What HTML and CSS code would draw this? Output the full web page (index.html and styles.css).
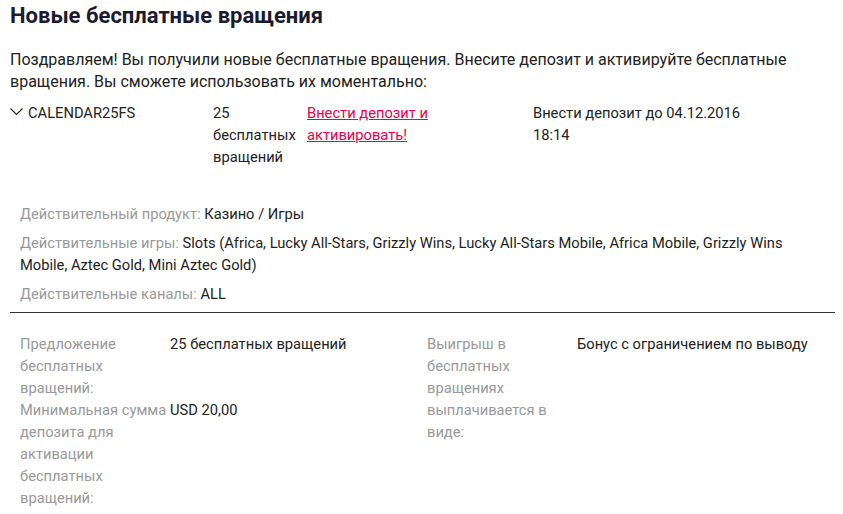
FILE: index.html
```html
<!DOCTYPE html>
<html lang="ru">

<head>
    <meta charset="UTF-8">
    <meta name="viewport" content="width=device-width, initial-scale=1.0">
    <title>Новые бесплатные вращения</title>
    <link rel="stylesheet" href="styles.css">
</head>

<body>
    <h2 class="title">Новые бесплатные вращения</h2>
    <p class="intro">Поздравляем! Вы получили новые бесплатные вращения. Внесите депозит и активируйте бесплатные
        вращения. Вы сможете использовать их моментально:</p>

    <div class="offer-row">
        <div class="offer-code">
            <svg class="chevron" width="13" height="8" viewBox="0 0 13 8">
                <path d="M0.5 0.5 L6.5 6.5 L12.5 0.5" fill="none" stroke="#222" stroke-width="1.2" />
            </svg>
            CALENDAR25FS
        </div>
        <div class="offer-amount">25 бесплатных вращений</div>
        <div class="offer-action"><a href="#">Внести депозит и активировать!</a></div>
        <div class="offer-expiry">Внести депозит до 04.12.2016 18:14</div>
    </div>

    <div class="details">
        <p><span class="label">Действительный продукт:</span> Казино / Игры</p>
        <p><span class="label">Действительные игры:</span> Slots (Africa, Lucky All-Stars, Grizzly Wins, Lucky All-Stars
            Mobile, Africa Mobile, Grizzly Wins Mobile, Aztec Gold, Mini Aztec Gold)</p>
        <p><span class="label">Действительные каналы:</span> ALL</p>
    </div>

    <div class="terms">
        <dl class="terms-col">
            <dt>Предложение бесплатных вращений:</dt>
            <dd>25 бесплатных вращений</dd>
            <dt>Минимальная сумма депозита для активации бесплатных вращений:</dt>
            <dd>USD 20,00</dd>
        </dl>
        <dl class="terms-col">
            <dt>Выигрыш в бесплатных вращениях выплачивается в виде:</dt>
            <dd>Бонус с ограничением по выводу</dd>
        </dl>
    </div>
</body>

</html>
```

FILE: styles.css
```css
body {
    margin: 0;
    padding: 0 8px 0 10px;
    font-family: Roboto, "Liberation Sans", sans-serif;
    font-size: 14.7px;
    line-height: 22px;
    color: #222;
    background: #fff;
}

.title {
    margin: 3px 0 0;
    font-size: 22px;
    line-height: 26px;
    font-weight: 700;
    color: #1b1b2f;
}

.intro {
    margin: 20px 0 0;
    font-size: 16px;
}

.offer-row {
    display: flex;
    margin-top: 9px;
}

.offer-code {
    width: 203px;
    display: flex;
    align-items: flex-start;
}

.chevron {
    margin: 6px 5px 0 0;
}

.offer-amount {
    width: 94px;
}

.offer-action {
    width: 226px;
}

.offer-action a {
    display: inline-block;
    max-width: 140px;
    color: #e8004c;
}

.offer-expiry {
    width: 220px;
}

.details {
    margin-top: 35px;
    padding: 0 20px 7px 10px;
    border-bottom: 1px solid #333;
}

.details p {
    margin: 0 0 7px;
}

.details p:last-child {
    margin-bottom: 0;
}

.label {
    color: #999;
}

.terms {
    display: flex;
    padding: 20px 0 0 10px;
}

.terms-col {
    display: grid;
    grid-template-columns: 150px 1fr;
    align-content: start;
    margin: 0;
}

.terms-col:first-child {
    width: 407px;
}

.terms-col dt {
    color: #999;
}

.terms-col dd {
    margin: 0;
}
```
